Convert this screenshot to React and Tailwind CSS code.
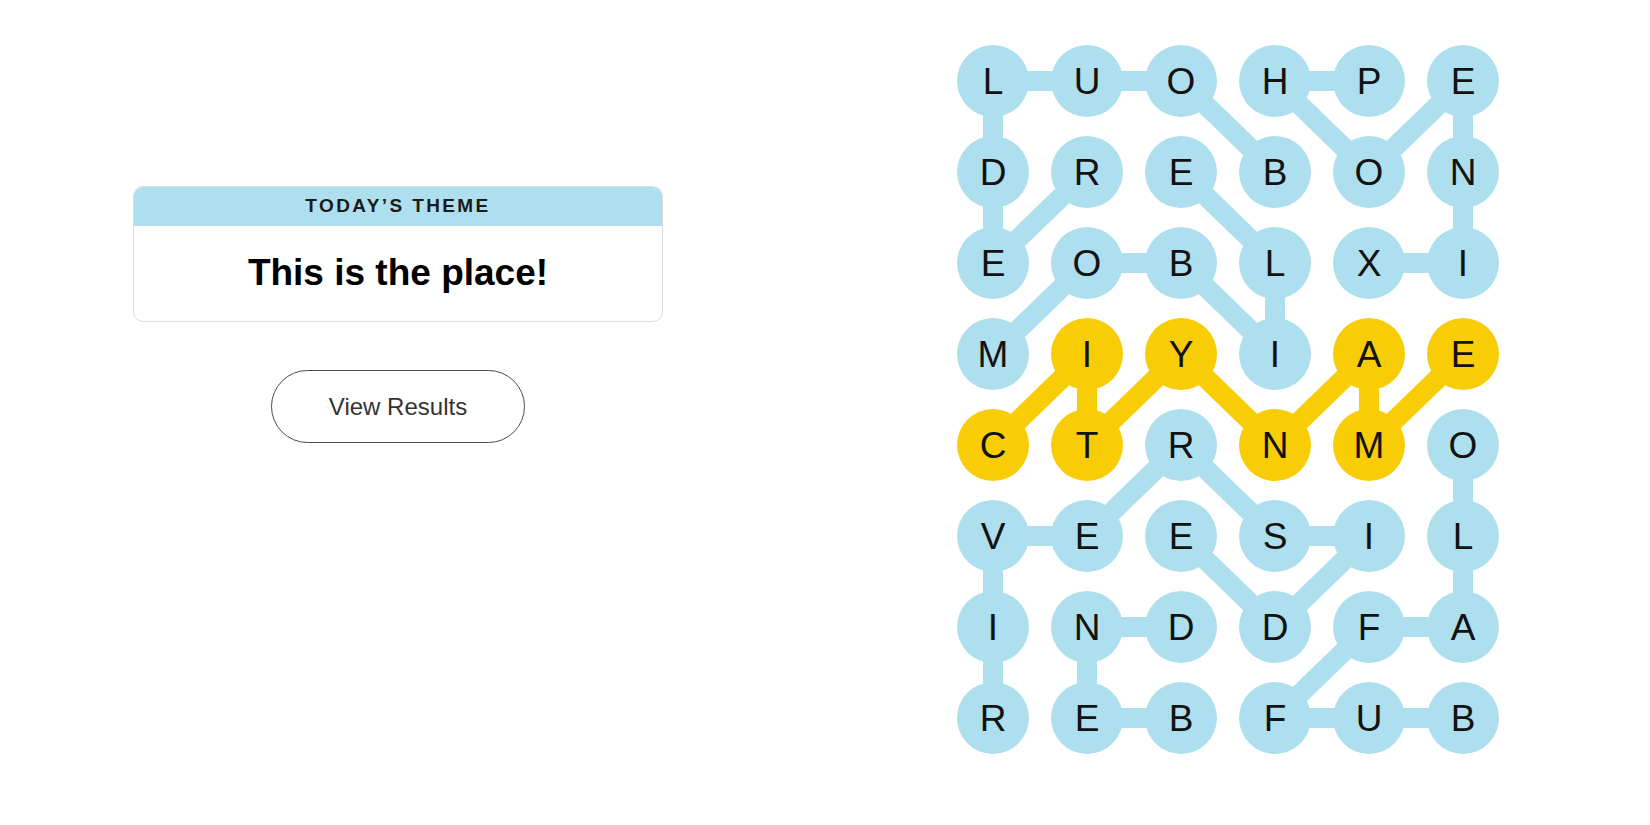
import React from "react";

const BLUE = "#aedfee";
const YELLOW = "#f8cd05";

const GRID = [
  "LUOHPE",
  "DREBON",
  "EOBLXI",
  "MIYIAE",
  "CTRNMO",
  "VEESIL",
  "INDDFA",
  "REBFUB",
];

// cells of the spangram (row-col)
const SPANGRAM = ["4-0", "3-1", "4-1", "3-2", "4-3", "3-4", "4-4", "3-5"];

// links between cells: [r1, c1, r2, c2]
const THEME_LINKS = [
  [0, 0, 0, 1],
  [0, 1, 0, 2],
  [0, 0, 1, 0],
  [1, 0, 2, 0],
  [0, 2, 1, 3],
  [0, 3, 0, 4],
  [0, 3, 1, 4],
  [1, 4, 0, 5],
  [0, 5, 1, 5],
  [1, 5, 2, 5],
  [2, 4, 2, 5],
  [1, 1, 2, 0],
  [1, 2, 2, 3],
  [2, 3, 3, 3],
  [2, 1, 2, 2],
  [2, 1, 3, 0],
  [2, 2, 3, 3],
  [4, 2, 5, 1],
  [4, 2, 5, 3],
  [4, 5, 5, 5],
  [5, 0, 5, 1],
  [5, 0, 6, 0],
  [6, 0, 7, 0],
  [5, 2, 6, 3],
  [5, 3, 5, 4],
  [5, 4, 6, 3],
  [5, 5, 6, 5],
  [6, 1, 6, 2],
  [6, 1, 7, 1],
  [7, 1, 7, 2],
  [6, 4, 6, 5],
  [6, 4, 7, 3],
  [7, 3, 7, 4],
  [7, 4, 7, 5],
];

const SPAN_LINKS = [
  [4, 0, 3, 1],
  [3, 1, 4, 1],
  [4, 1, 3, 2],
  [3, 2, 4, 3],
  [4, 3, 3, 4],
  [3, 4, 4, 4],
  [4, 4, 3, 5],
];

const cx = (c) => 36 + c * 94;
const cy = (r) => 36 + r * 91;

function Board() {
  return (
    <div className="relative grid grid-cols-[repeat(6,72px)] gap-x-[22px] gap-y-[19px]">
      <svg className="absolute inset-0" width="542" height="709" aria-hidden="true">
        {THEME_LINKS.map(([r1, c1, r2, c2], i) => (
          <line key={`t${i}`} x1={cx(c1)} y1={cy(r1)} x2={cx(c2)} y2={cy(r2)} stroke={BLUE} strokeWidth="20" />
        ))}
        {SPAN_LINKS.map(([r1, c1, r2, c2], i) => (
          <line key={`s${i}`} x1={cx(c1)} y1={cy(r1)} x2={cx(c2)} y2={cy(r2)} stroke={YELLOW} strokeWidth="20" />
        ))}
      </svg>
      {GRID.map((row, r) =>
        row.split("").map((ch, c) => {
          const span = SPANGRAM.includes(`${r}-${c}`);
          return (
            <button
              key={`${r}-${c}`}
              className={`relative flex h-[72px] w-[72px] items-center justify-center rounded-full text-[37px] leading-none text-[#121212] ${
                span ? "bg-[#f8cd05]" : "bg-[#aedfee]"
              }`}
            >
              {ch}
            </button>
          );
        })
      )}
    </div>
  );
}

export default function App() {
  return (
    <div className="flex min-h-[825px] bg-white pt-[45px] font-['Liberation_Sans',Arial,sans-serif]">
      <div className="ml-[133px] flex w-[530px] flex-col items-center pt-[141px]">
        <div className="w-full overflow-hidden rounded-[10px] border border-[#dcdcdc]">
          <div className="flex h-[39px] items-center justify-center bg-[#aedfee] text-[19px] font-semibold uppercase tracking-[2.4px] text-[#1a1a1a]">
            Today’s Theme
          </div>
          <div className="flex h-[95px] items-center justify-center pb-[2px] text-[37px] font-bold text-black">
            This is the place!
          </div>
        </div>
        <button className="mt-[48px] flex h-[73px] w-[254px] items-center justify-center rounded-full border border-[#4a4a4a] bg-white text-[24px] text-[#333]">
          View Results
        </button>
      </div>
      <div className="ml-[294px]">
        <Board />
      </div>
    </div>
  );
}
